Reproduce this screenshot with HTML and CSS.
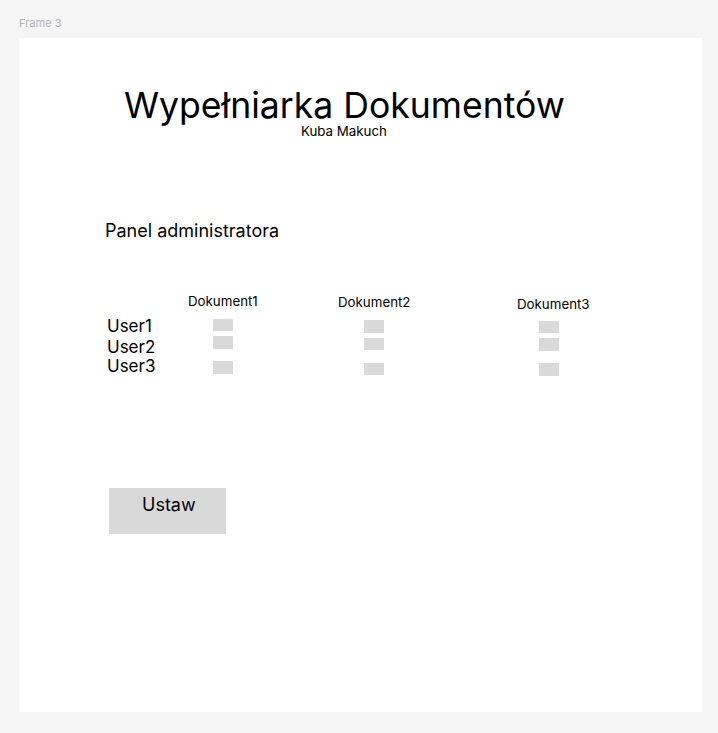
FILE: index.html
```html
<!DOCTYPE html>
<html lang="pl">
<head>
<meta charset="utf-8">
<title>Frame 3</title>
<link rel="stylesheet" href="styles.css">
</head>
<body>
<div class="frame-label">Frame 3</div>
<main class="frame">
  <header class="heading">
    <h1 class="title">Wypełniarka Dokumentów</h1>
    <p class="author">Kuba Makuch</p>
  </header>
  <h2 class="panel-title">Panel administratora</h2>
  <section class="matrix">
    <div class="col col-users">
      <div class="user">User1</div>
      <div class="user user-2">User2</div>
      <div class="user">User3</div>
    </div>
    <div class="col col-d1">
      <div class="doc">Dokument1</div>
      <div class="boxes">
        <span class="box"></span>
        <span class="box box-2"></span>
        <span class="box box-3"></span>
      </div>
    </div>
    <div class="col col-d2">
      <div class="doc">Dokument2</div>
      <div class="boxes">
        <span class="box"></span>
        <span class="box box-2"></span>
        <span class="box box-3"></span>
      </div>
    </div>
    <div class="col col-d3">
      <div class="doc">Dokument3</div>
      <div class="boxes">
        <span class="box"></span>
        <span class="box box-2"></span>
        <span class="box box-3"></span>
      </div>
    </div>
  </section>
  <button class="set-btn" type="button">Ustaw</button>
</main>
</body>
</html>
```

FILE: styles.css
```css
* { box-sizing: border-box; }

html, body {
  margin: 0;
  padding: 0;
  background: #f5f5f5;
  font-family: "Inter", "Noto Sans", sans-serif;
  color: #000;
}

body {
  padding-top: 17px;
  height: 733px;
  overflow: hidden;
}

.frame-label {
  margin-left: 19px;
  font-size: 11px;
  line-height: 13px;
  color: #b3b3b3;
}

.frame {
  display: block;
  margin: 8px 0 0 19px;
  width: 683px;
  height: 674px;
  background: #fff;
  overflow: hidden;
}

.heading {
  padding: 51.2px 0 0 105px;
}

.title {
  margin: 0;
  font-size: 35.6px;
  line-height: 34px;
  font-weight: 400;
  white-space: nowrap;
}

.author {
  margin: 0 0 0 177px;
  font-size: 13.3px;
  line-height: 16px;
  white-space: nowrap;
}

.panel-title {
  margin: 81.3px 0 0 86px;
  font-size: 18px;
  line-height: 22px;
  font-weight: 400;
}

.matrix {
  display: flex;
  align-items: flex-start;
  margin: 50.5px 0 0 88px;
  height: 84px;
}

.col { display: flex; flex-direction: column; }

.col-users { width: 81px; padding-top: 23.7px; }
.user { font-size: 17px; line-height: 19px; }
.user-2 { margin-top: 2px; }

.doc {
  font-size: 13.3px;
  line-height: 15px;
  white-space: nowrap;
}

.boxes { display: flex; flex-direction: column; }

.box {
  display: block;
  width: 20px;
  height: 12.5px;
  background: #d9d9d9;
}

.box-2 { margin-top: 5px; }
.box-3 { margin-top: 12.5px; }

.col-d1 { width: 150px; padding-top: 1px; }
.col-d1 .boxes { margin: 9.7px 0 0 25px; }

.col-d2 { width: 179px; padding-top: 2px; }
.col-d2 .boxes { margin: 10.5px 0 0 26px; }

.col-d3 { width: 100px; padding-top: 4.5px; }
.col-d3 .boxes { margin: 8.5px 0 0 21.5px; }

.set-btn {
  display: flex;
  align-items: flex-start;
  margin: 111px 0 0 90px;
  width: 117px;
  height: 46px;
  padding: 6px 0 0 33px;
  border: 0;
  background: #d9d9d9;
  font-family: inherit;
  font-size: 18px;
  line-height: 22px;
  color: #000;
  text-align: left;
}
```
